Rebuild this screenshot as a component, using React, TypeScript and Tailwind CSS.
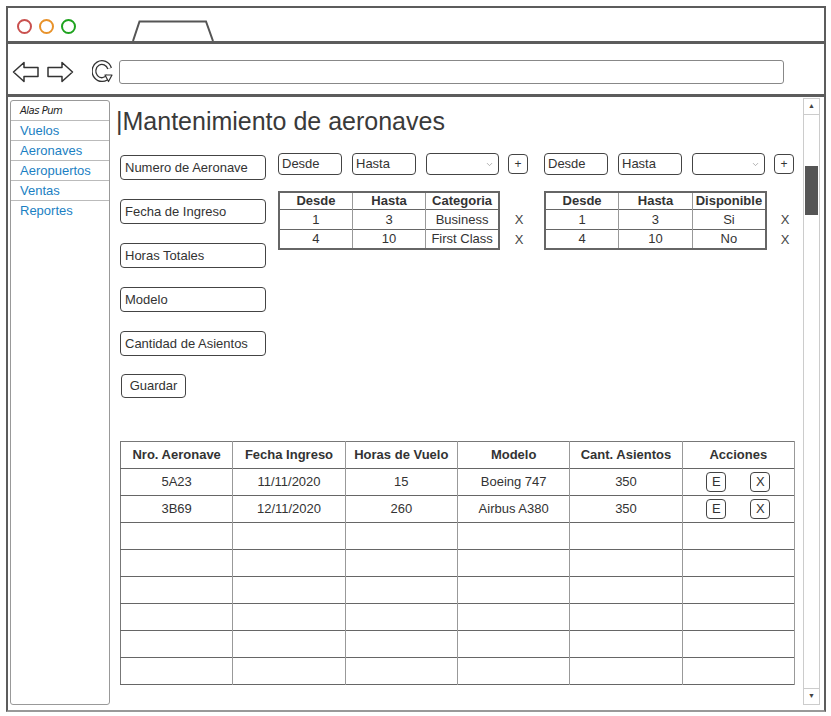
import React from 'react'
import { ChevronDown } from 'lucide-react'

const menu = ['Vuelos', 'Aeronaves', 'Aeropuertos', 'Ventas', 'Reportes']

const campos = ['Numero de Aeronave', 'Fecha de Ingreso', 'Horas Totales', 'Modelo', 'Cantidad de Asientos']

const aeronaves = [
	['5A23', '11/11/2020', '15', 'Boeing 747', '350'],
	['3B69', '12/11/2020', '260', 'Airbus A380', '350'],
]

const Input = ({ text, w }: { text: string; w: string }) => (
	<div className={`${w} h-[22px] border border-[#444] rounded-[4px] flex items-center pl-[3px] text-[13px] text-[#333]`}>{text}</div>
)

const Grupo = ({ cols, rows, widths }: { cols: string[]; rows: string[][]; widths: string[] }) => (
	<div className='flex flex-col'>
		<div className='flex items-center'>
			<Input text='Desde' w='w-[64px]' />
			<div className='ml-[10px]'><Input text='Hasta' w='w-[64px]' /></div>
			<div className='ml-[10px] w-[73px] h-[22px] border border-[#444] rounded-[4px] flex items-center justify-end pr-[4px]'>
				<ChevronDown size={9} color='#999' />
			</div>
			<div className='ml-[9px] w-[20px] h-[20px] border border-[#444] rounded-[4px] flex items-center justify-center text-[12px] text-[#333]'>+</div>
		</div>
		<div className='flex mt-[16px]'>
			<table className={`${widths[0]} table-fixed border-collapse border-2 border-[#666] text-[13px] text-[#333]`}>
				<thead>
					<tr className='h-[17px] border-b border-[#666]'>
						{cols.map((c, i) => (
							<th key={c} className={`font-bold leading-none ${i < 2 ? 'border-r border-[#999]' : ''}`}>{c}</th>
						))}
					</tr>
				</thead>
				<tbody>
					{rows.map((r, ri) => (
						<tr key={ri} className={`h-[20px] ${ri === 0 ? 'border-b border-[#666]' : ''}`}>
							{r.map((v, i) => (
								<td key={i} className={`text-center leading-none ${i < 2 ? 'border-r border-[#999]' : ''}`}>{v}</td>
							))}
						</tr>
					))}
				</tbody>
			</table>
			<div className={`${widths[1]} flex flex-col pt-[19px] text-[13px] text-[#444]`}>
				<div className='h-[20px] flex items-center justify-center'>X</div>
				<div className='h-[20px] flex items-center justify-center'>X</div>
			</div>
		</div>
	</div>
)

const App = () => {
	return (
		<div className="w-[831px] h-[716px] bg-white pt-[6px] pl-[6px] font-['Liberation_Sans',Arial,sans-serif]">
			<div className='w-[820px] h-[706px] border-2 border-[#5c5c5c] border-b-[#999] flex flex-col'>
				{/* barra de titulo */}
				<div className='h-[36px] border-b-[3px] border-[#5c5c5c] flex items-end shrink-0'>
					<div className='self-start mt-[11px] ml-[9px] flex gap-[7px]'>
						<div className='w-[15px] h-[15px] rounded-full border-2 border-[#c9504e]' />
						<div className='w-[15px] h-[15px] rounded-full border-2 border-[#e8922a]' />
						<div className='w-[15px] h-[15px] rounded-full border-2 border-[#1fa31f]' />
					</div>
					<svg width='82' height='21' className='ml-[56px]'>
						<path d='M1 21 L7.5 1.5 L74 1.5 L81 21' fill='none' stroke='#555' strokeWidth='2' />
					</svg>
				</div>

				{/* barra de navegacion */}
				<div className='h-[53px] border-b-[3px] border-[#5c5c5c] flex items-center pt-[6px] shrink-0'>
					<svg width='28' height='22' className='ml-[4px]'>
						<polygon points='1.5,11 12,1.5 12,6.5 26,6.5 26,15.5 12,15.5 12,20.5' fill='none' stroke='#333' strokeWidth='1.5' strokeLinejoin='round' />
					</svg>
					<svg width='28' height='22' className='ml-[6px]'>
						<polygon points='26.5,11 16,1.5 16,6.5 2,6.5 2,15.5 16,15.5 16,20.5' fill='none' stroke='#333' strokeWidth='1.5' strokeLinejoin='round' />
					</svg>
					<svg width='22' height='26' className='ml-[18px]'>
						<path d='M17.6 9.5 A8 8.5 0 1 0 16.5 17' fill='none' stroke='#333' strokeWidth='5' />
						<path d='M17.6 9.5 A8 8.5 0 1 0 16.5 17' fill='none' stroke='#fff' strokeWidth='2.4' />
						<polygon points='13,16 20,16 16.5,22.5' fill='#fff' stroke='#333' strokeWidth='1.2' strokeLinejoin='round' />
					</svg>
					<div className='ml-[5px] w-[665px] h-[24px] border-[1.5px] border-[#888] rounded-[3px]' />
				</div>

				{/* contenido */}
				<div className='flex-1 flex'>
					<div className='ml-[2px] mt-[3px] w-[100px] h-[605px] border border-[#999] rounded-[3px] flex flex-col'>
						<div className='h-[20px] border-b border-[#bbb] pl-[9px] flex items-center text-[10px] italic text-[#222] font-["DejaVu_Sans",sans-serif] tracking-[-0.5px]'>Alas Pum</div>
						{menu.map((m, i) => (
							<div key={m} className={`h-[20px] pl-[9px] flex items-center text-[13px] text-[#1b7fc3] ${i < menu.length - 1 ? 'border-b border-[#bbb]' : ''}`}>{m}</div>
						))}
					</div>

					<div className='w-[693px] pl-[10px] flex flex-col'>
						<div className='mt-[10px] -ml-[4px] text-[25px] leading-[29px] text-[#3a3a3a]'>|Mantenimiento de aeronaves</div>

						<div className='flex mt-[17px]'>
							<div className='w-[146px] pt-[2px] flex flex-col gap-[19px]'>
								{campos.map((c) => (
									<div key={c} className='h-[25px] border border-[#444] rounded-[4px] flex items-center pl-[4px] text-[13px] text-[#333]'>{c}</div>
								))}
								<div className='-mt-[1px] ml-[1px] w-[65px] h-[24px] border border-[#444] rounded-[4px] flex items-center justify-center text-[13px] text-[#333]'>Guardar</div>
							</div>
							<div className='ml-[12px] w-[266px]'>
								<Grupo cols={['Desde', 'Hasta', 'Categoria']} rows={[['1', '3', 'Business'], ['4', '10', 'First Class']]} widths={['w-[222px]', 'w-[38px]']} />
							</div>
							<Grupo cols={['Desde', 'Hasta', 'Disponible']} rows={[['1', '3', 'Si'], ['4', '10', 'No']]} widths={['w-[223px]', 'w-[36px]']} />
						</div>

						<table className='mt-[43px] w-[675px] table-fixed border-collapse border border-[#777] text-[13px] text-[#333]'>
							<thead>
								<tr className='h-[27px] border-b border-[#666]'>
									{['Nro. Aeronave', 'Fecha Ingreso', 'Horas de Vuelo', 'Modelo', 'Cant. Asientos', 'Acciones'].map((h) => (
										<th key={h} className='font-bold border-r border-[#999]'>{h}</th>
									))}
								</tr>
							</thead>
							<tbody>
								{Array.from({ length: 8 }).map((_, ri) => {
									const row = aeronaves[ri]
									return (
										<tr key={ri} className='h-[27px] border-b border-[#666]'>
											{[0, 1, 2, 3, 4].map((ci) => (
												<td key={ci} className='text-center border-r border-[#999]'>{row ? row[ci] : ''}</td>
											))}
											<td className='border-r border-[#999]'>
												{row && (
													<div className='flex justify-center gap-[24px] text-[13px]'>
														<div className='w-[20px] h-[20px] border border-[#444] rounded-[4px] flex items-center justify-center'>E</div>
														<div className='w-[20px] h-[20px] border border-[#444] rounded-[4px] flex items-center justify-center'>X</div>
													</div>
												)}
											</td>
										</tr>
									)
								})}
							</tbody>
						</table>
					</div>

					{/* scrollbar */}
					<div className='mt-[1px] w-[17px] h-[607px] border border-[#ccc] flex flex-col items-center'>
						<div className='w-full h-[16px] border-b border-[#ccc] flex items-center justify-center text-[7px] text-[#444]'>▲</div>
						<div className='mt-[51px] w-[13px] h-[49px] bg-[#555]' />
						<div className='mt-auto w-full h-[16px] border-t border-[#ccc] flex items-center justify-center text-[7px] text-[#444]'>▼</div>
					</div>
				</div>
			</div>
		</div>
	)
}

export default App
